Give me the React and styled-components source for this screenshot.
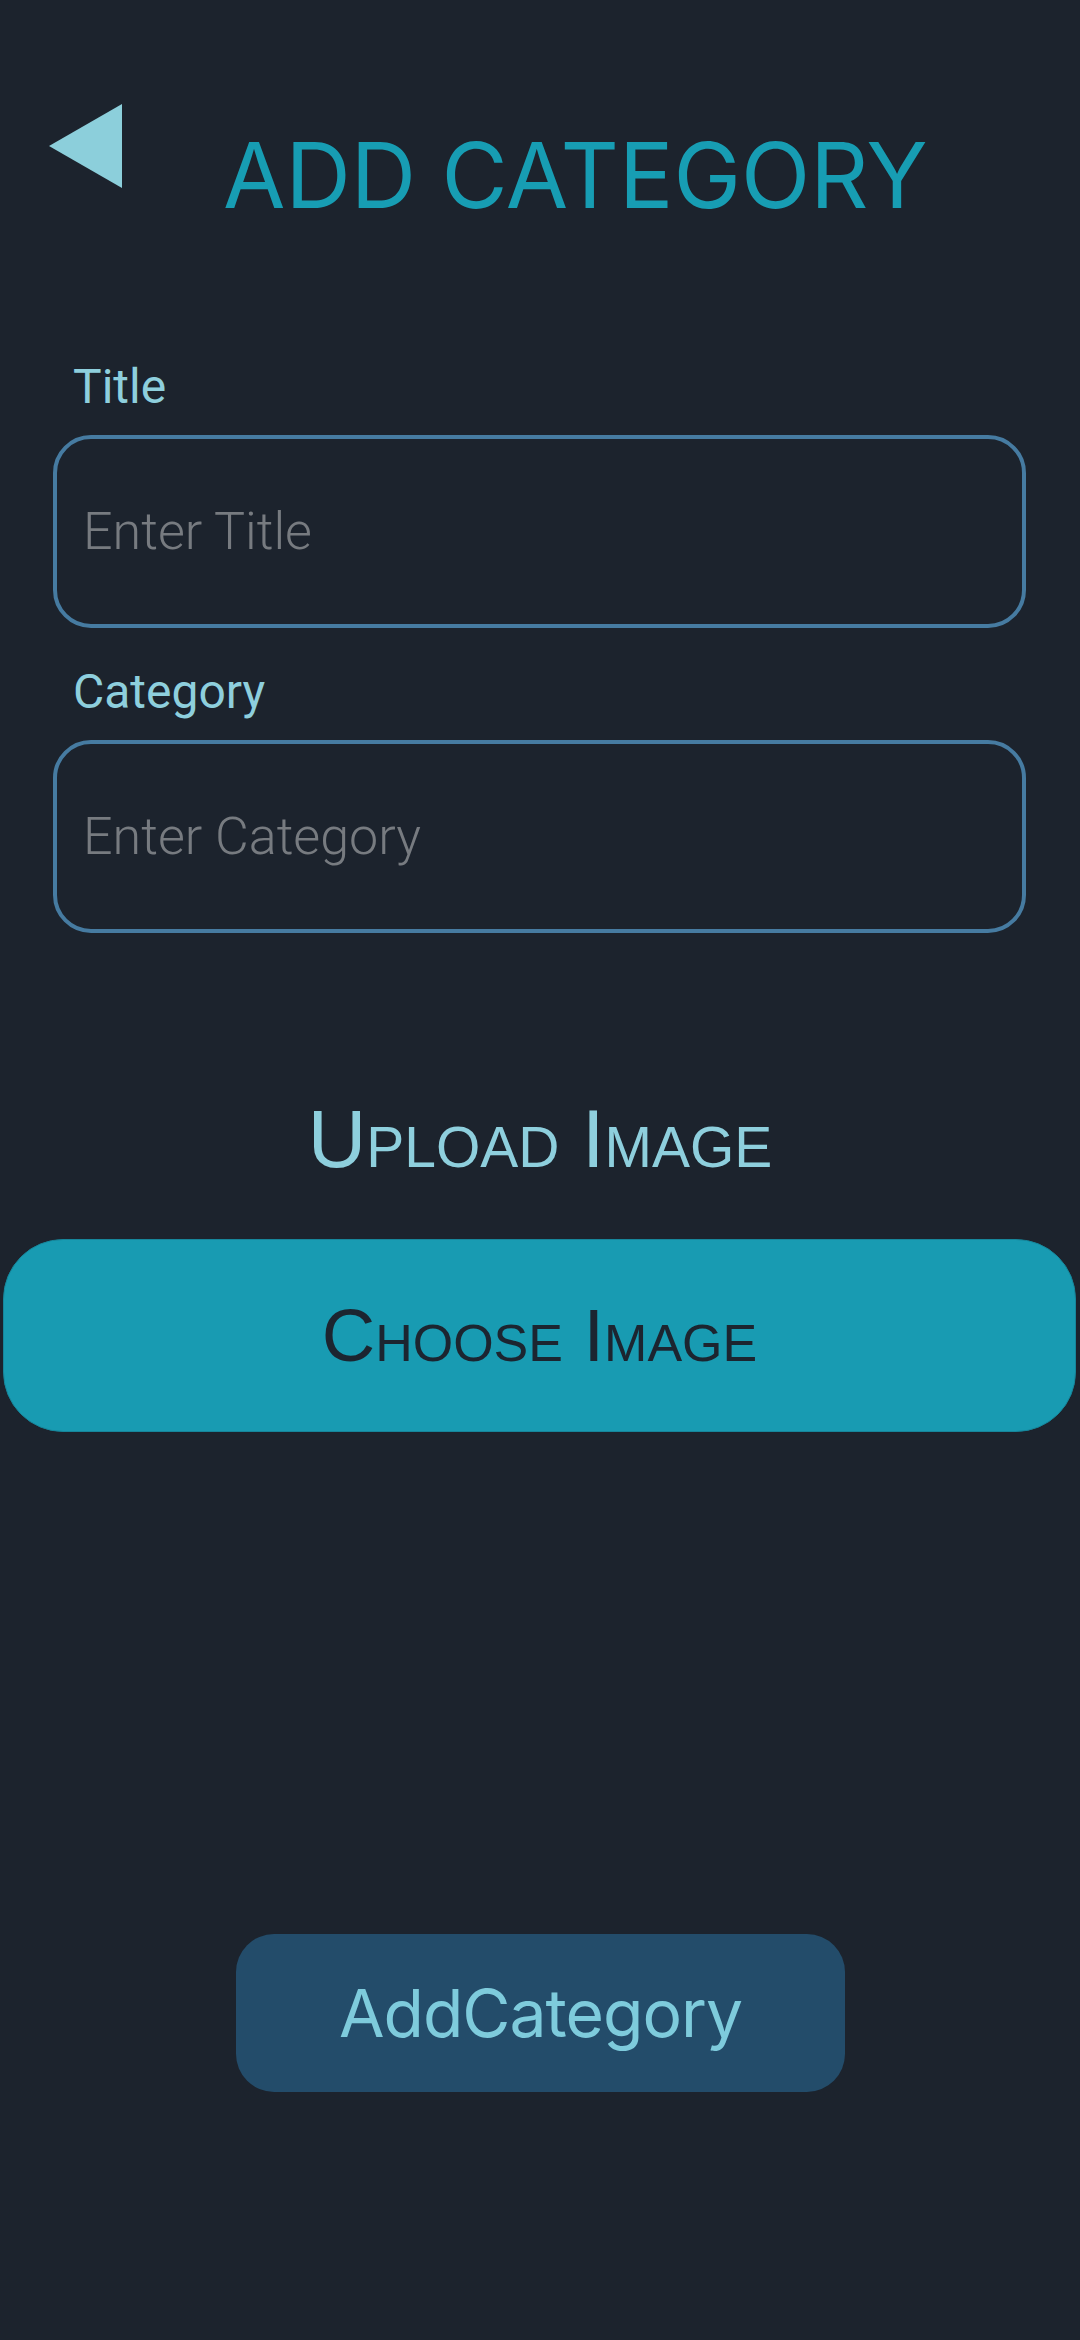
import React from "react";
import styled, { createGlobalStyle } from "styled-components";

const Global = createGlobalStyle`
  html, body { margin: 0; padding: 0; background: #1c232d; }
  body { font-family: "Roboto", sans-serif; }
  * { box-sizing: border-box; }
`;

const Page = styled.div`
  width: 1080px;
  min-height: 2340px;
  background: #1c232d;
  display: flex;
  flex-direction: column;
`;

const Header = styled.header`
  display: flex;
  align-items: flex-start;
  padding: 104px 0 0 49px;
`;

const BackButton = styled.button`
  background: none;
  border: 0;
  padding: 0;
  width: 73px;
  height: 84px;
  display: flex;
  cursor: pointer;
`;

const PageTitle = styled.h1`
  margin: 26px 0 0 101px;
  font-family: "Inter", sans-serif;
  font-weight: 400;
  font-size: 90.5px;
  line-height: 90px;
  color: #179db3;
  white-space: nowrap;
`;

const Form = styled.form`
  display: flex;
  flex-direction: column;
  gap: 36px;
  padding: 0 54px 0 53px;
  margin-top: 139px;
`;

const Field = styled.label`
  display: flex;
  flex-direction: column;
  gap: 20px;
`;

const FieldLabel = styled.span`
  font-family: "Roboto", sans-serif;
  font-weight: 400;
  font-size: 48px;
  line-height: 56px;
  color: #8ecfdd;
  padding-left: 20px;
`;

const TextInput = styled.input`
  width: 973px;
  height: 193px;
  border: 4px solid #467ba1;
  border-radius: 38px;
  background: transparent;
  padding: 0 26px;
  font-family: "Roboto", sans-serif;
  font-weight: 300;
  font-size: 52px;
  color: #d0d4d8;
  outline: none;
  &::placeholder {
    color: #777b80;
  }
`;

const UploadHeading = styled.h2`
  margin: 166px 0 0;
  text-align: center;
  font-family: "Liberation Sans", Arial, sans-serif;
  font-weight: 400;
  font-variant: small-caps;
  font-size: 81px;
  line-height: 81px;
  color: #8ecfdd;
`;

const ChooseButton = styled.button`
  margin: 59px 0 0 3px;
  width: 1073px;
  height: 193px;
  border: 1px solid #16869b;
  border-radius: 60px;
  background: #189bb2;
  display: flex;
  align-items: center;
  justify-content: center;
  font-family: "Liberation Sans", Arial, sans-serif;
  font-weight: 400;
  font-variant: small-caps;
  font-size: 74px;
  color: #1c2530;
  cursor: pointer;
`;

const SubmitButton = styled.button`
  align-self: center;
  margin: 502px 0 0 1px;
  width: 609px;
  height: 158px;
  border: 0;
  border-radius: 38px;
  background: #234c6a;
  display: flex;
  align-items: center;
  justify-content: center;
  font-family: "Inter", sans-serif;
  font-weight: 400;
  font-size: 66px;
  letter-spacing: -1px;
  color: #7ecbdc;
  cursor: pointer;
`;

export default function App() {
  return (
    <Page>
      <Global />
      <Header>
        <BackButton aria-label="Back">
          <svg width="73" height="84" viewBox="0 0 73 84">
            <polygon points="0,42 73,0 73,84" fill="#8ccfdb" />
          </svg>
        </BackButton>
        <PageTitle>ADD CATEGORY</PageTitle>
      </Header>
      <Form onSubmit={(e) => e.preventDefault()}>
        <Field>
          <FieldLabel>Title</FieldLabel>
          <TextInput placeholder="Enter Title" />
        </Field>
        <Field>
          <FieldLabel>Category</FieldLabel>
          <TextInput placeholder="Enter Category" />
        </Field>
      </Form>
      <UploadHeading>Upload Image</UploadHeading>
      <ChooseButton type="button">Choose Image</ChooseButton>
      <SubmitButton type="button">AddCategory</SubmitButton>
    </Page>
  );
}
